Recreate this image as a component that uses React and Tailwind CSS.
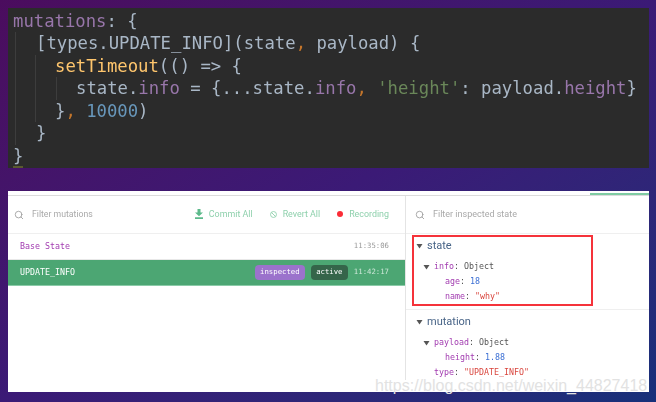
import React from "react";
import { Search } from "lucide-react";

const mono = "font-['DejaVu_Sans_Mono',monospace]";

const Caret = () => (
  <svg width="7" height="6" viewBox="0 0 7 6" className="shrink-0">
    <path d="M0.5 1h6L3.5 5.5z" fill="#555" />
  </svg>
);

const Prop = ({ children }) => <span className="text-[#9876aa]">{children}</span>;
const Comma = () => <span className="text-[#c5762b]">,</span>;

const CodeBlock = () => (
  <div className="ml-2 mt-2 h-[160px] w-[641px] bg-[#2b2b2b]">
    <div className={`${mono} pl-[5px] pt-[1.5px] text-[17.25px] leading-[22.5px] text-[#a9b7c6] blur-[0.3px]`}>
      <div>
        <Prop>mutations</Prop>: {"{"}
      </div>
      <div className="ml-[2px] border-l border-[#3d3d3d] pl-[20px]">
        <div>[types.UPDATE_INFO](state<Comma /> payload) {"{"}</div>
        <div className="ml-[-1px] border-l border-[#3d3d3d] pl-[19px]">
          <div>
            <span className="text-[#ffc66d]">setTimeout</span>(() =&gt; {"{"}
          </div>
          <div className="ml-[1px] whitespace-pre border-l border-[#3d3d3d] pl-[19px]">
            state.<Prop>info</Prop> = {"{"}...state.<Prop>info</Prop>
            <Comma /> <span className="text-[#6a8759]">'height'</span>: payload.<Prop>height</Prop>
            {"}"}
          </div>
          <div>
            {"}"}
            <Comma /> <span className="text-[#6897bb]">10000</span>)
          </div>
        </div>
        <div>{"}"}</div>
      </div>
      <div>{"}"}</div>
      <div className="mt-[-1px] h-[2px] w-[10px] bg-[#5a5a2f]" />
    </div>
  </div>
);

const ToolbarAction = ({ icon, label }) => (
  <div className="flex items-center gap-[6px] text-[8.9px] text-[#8ed0ac]">
    {icon}
    <span>{label}</span>
  </div>
);

const MutationsPane = () => (
  <div className="w-[398px] shrink-0 border-r border-[#e4e4e4]">
    <div className="flex h-[38px] items-center border-b border-[#efefef] pl-[6px] pr-[16px] font-['Roboto',sans-serif]">
      <Search size={10} strokeWidth={2} className="text-[#9a9a9a]" />
      <span className="ml-[8px] text-[8.7px] text-[#a9a9a9]">Filter mutations</span>
      <div className="ml-auto flex items-center gap-[17px]">
        <ToolbarAction
          label="Commit All"
          icon={
            <svg width="8" height="10" viewBox="0 0 8 10">
              <path d="M2.5 0h3v3.5H8L4 7.2 0 3.500h2.500zM0 8.300h8V10H0z" fill="#5cb98a" />
            </svg>
          }
        />
        <ToolbarAction
          label="Revert All"
          icon={
            <svg width="7" height="7" viewBox="0 0 8 8" fill="none" stroke="#8ed0ac" strokeWidth="1">
              <circle cx="4" cy="4" r="3.400" />
              <path d="M1.800 1.800l4.400 4.400" />
            </svg>
          }
        />
        <ToolbarAction label="Recording" icon={<span className="h-[6px] w-[6px] rounded-full bg-[#fb2c36]" />} />
      </div>
    </div>
    <div className={`${mono} flex h-[26px] items-center justify-between border-b border-[#e8e8e8] pl-[12px] pr-[16px] text-[8.3px]`}>
      <span className="text-[#a23bb0]">Base State</span>
      <span className="text-[7.3px] text-[#999]">11:35:06</span>
    </div>
    <div className={`${mono} flex h-[26px] items-center border-b border-[#8bcba8] bg-[#4ca673] pl-[12px] pr-[16px] text-[8.3px] text-white`}>
      <span>UPDATE_INFO</span>
      <span className="ml-auto flex h-[15px] w-[50px] items-center justify-center rounded-[4px] bg-[#9b72cc] text-[7.3px]">inspected</span>
      <span className="ml-[6px] flex h-[15px] w-[37px] items-center justify-center rounded-[4px] bg-[#35654a] text-[7.3px]">active</span>
      <span className="ml-[6px] text-[7.3px] text-[#cfe8da]">11:42:17</span>
    </div>
  </div>
);

const Key = ({ children }) => <span className="text-[#a23bb0]">{children}</span>;

const TreeRow = ({ indent, caret, children }) => (
  <div className={`${indent} flex h-[15px] items-center gap-[4px]`}>
    {caret && <Caret />}
    <span className="whitespace-pre">{children}</span>
  </div>
);

const Section = ({ title, children }) => (
  <div>
    <div className="mb-[4px] flex h-[18px] items-center gap-[4px] pl-[2px] font-['Roboto',sans-serif] text-[11px] text-[#486487]">
      <Caret />
      <span>{title}</span>
    </div>
    <div className={`${mono} text-[8.3px] text-[#555]`}>{children}</div>
  </div>
);

const InspectPane = () => (
  <div className="flex-1">
    <div className="flex h-[38px] items-center border-b border-[#efefef] pl-[9px] font-['Roboto',sans-serif]">
      <Search size={10} strokeWidth={2} className="text-[#9a9a9a]" />
      <span className="ml-[8px] text-[9px] text-[#a9a9a9]">Filter inspected state</span>
    </div>
    <div className="ml-[6px] mt-[1px] h-[71px] w-[181px] border-2 border-[#f5333a]">
      <Section title="state">
        <TreeRow indent="pl-[9px]" caret>
          <Key>info</Key>: Object
        </TreeRow>
        <TreeRow indent="pl-[31px]">
          <Key>age</Key>: <span className="text-[#3b6fd4]">18</span>
        </TreeRow>
        <TreeRow indent="pl-[31px]">
          <Key>name</Key>: <span className="text-[#d9453d]">"why"</span>
        </TreeRow>
      </Section>
    </div>
    <div className="mt-[3px] border-t border-[#efefef] pl-[8px] pt-[3px]">
      <Section title="mutation">
        <TreeRow indent="pl-[9px]" caret>
          <Key>payload</Key>: Object
        </TreeRow>
        <TreeRow indent="pl-[31px]">
          <Key>height</Key>: <span className="text-[#3b6fd4]">1.88</span>
        </TreeRow>
        <TreeRow indent="pl-[20px]">
          <Key>type</Key>: <span className="text-[#d9453d]">"UPDATE_INFO"</span>
        </TreeRow>
      </Section>
    </div>
  </div>
);

const App = () => (
  <div className="relative h-[402px] w-[656px] overflow-hidden bg-gradient-to-br from-[#4b0c5e] via-[#3b1a76] to-[#16307a]">
    <CodeBlock />
    <div className="ml-2 mt-[23px] h-[201px] w-[641px] bg-white">
      <div className="flex h-[4px] justify-end">
        <div className="mt-[2px] h-[2px] w-[59px] bg-[#7fcba3]" />
      </div>
      <div className="flex border-t border-[#dcdcdc] blur-[0.3px]">
        <MutationsPane />
        <InspectPane />
      </div>
    </div>
    <div className="absolute left-[375px] top-[374px] whitespace-nowrap font-['Liberation_Sans',sans-serif] text-[16px] text-[#e2e2e2]">
      https://blog.csdn.net/weixin_44827418
    </div>
  </div>
);

export default App;
